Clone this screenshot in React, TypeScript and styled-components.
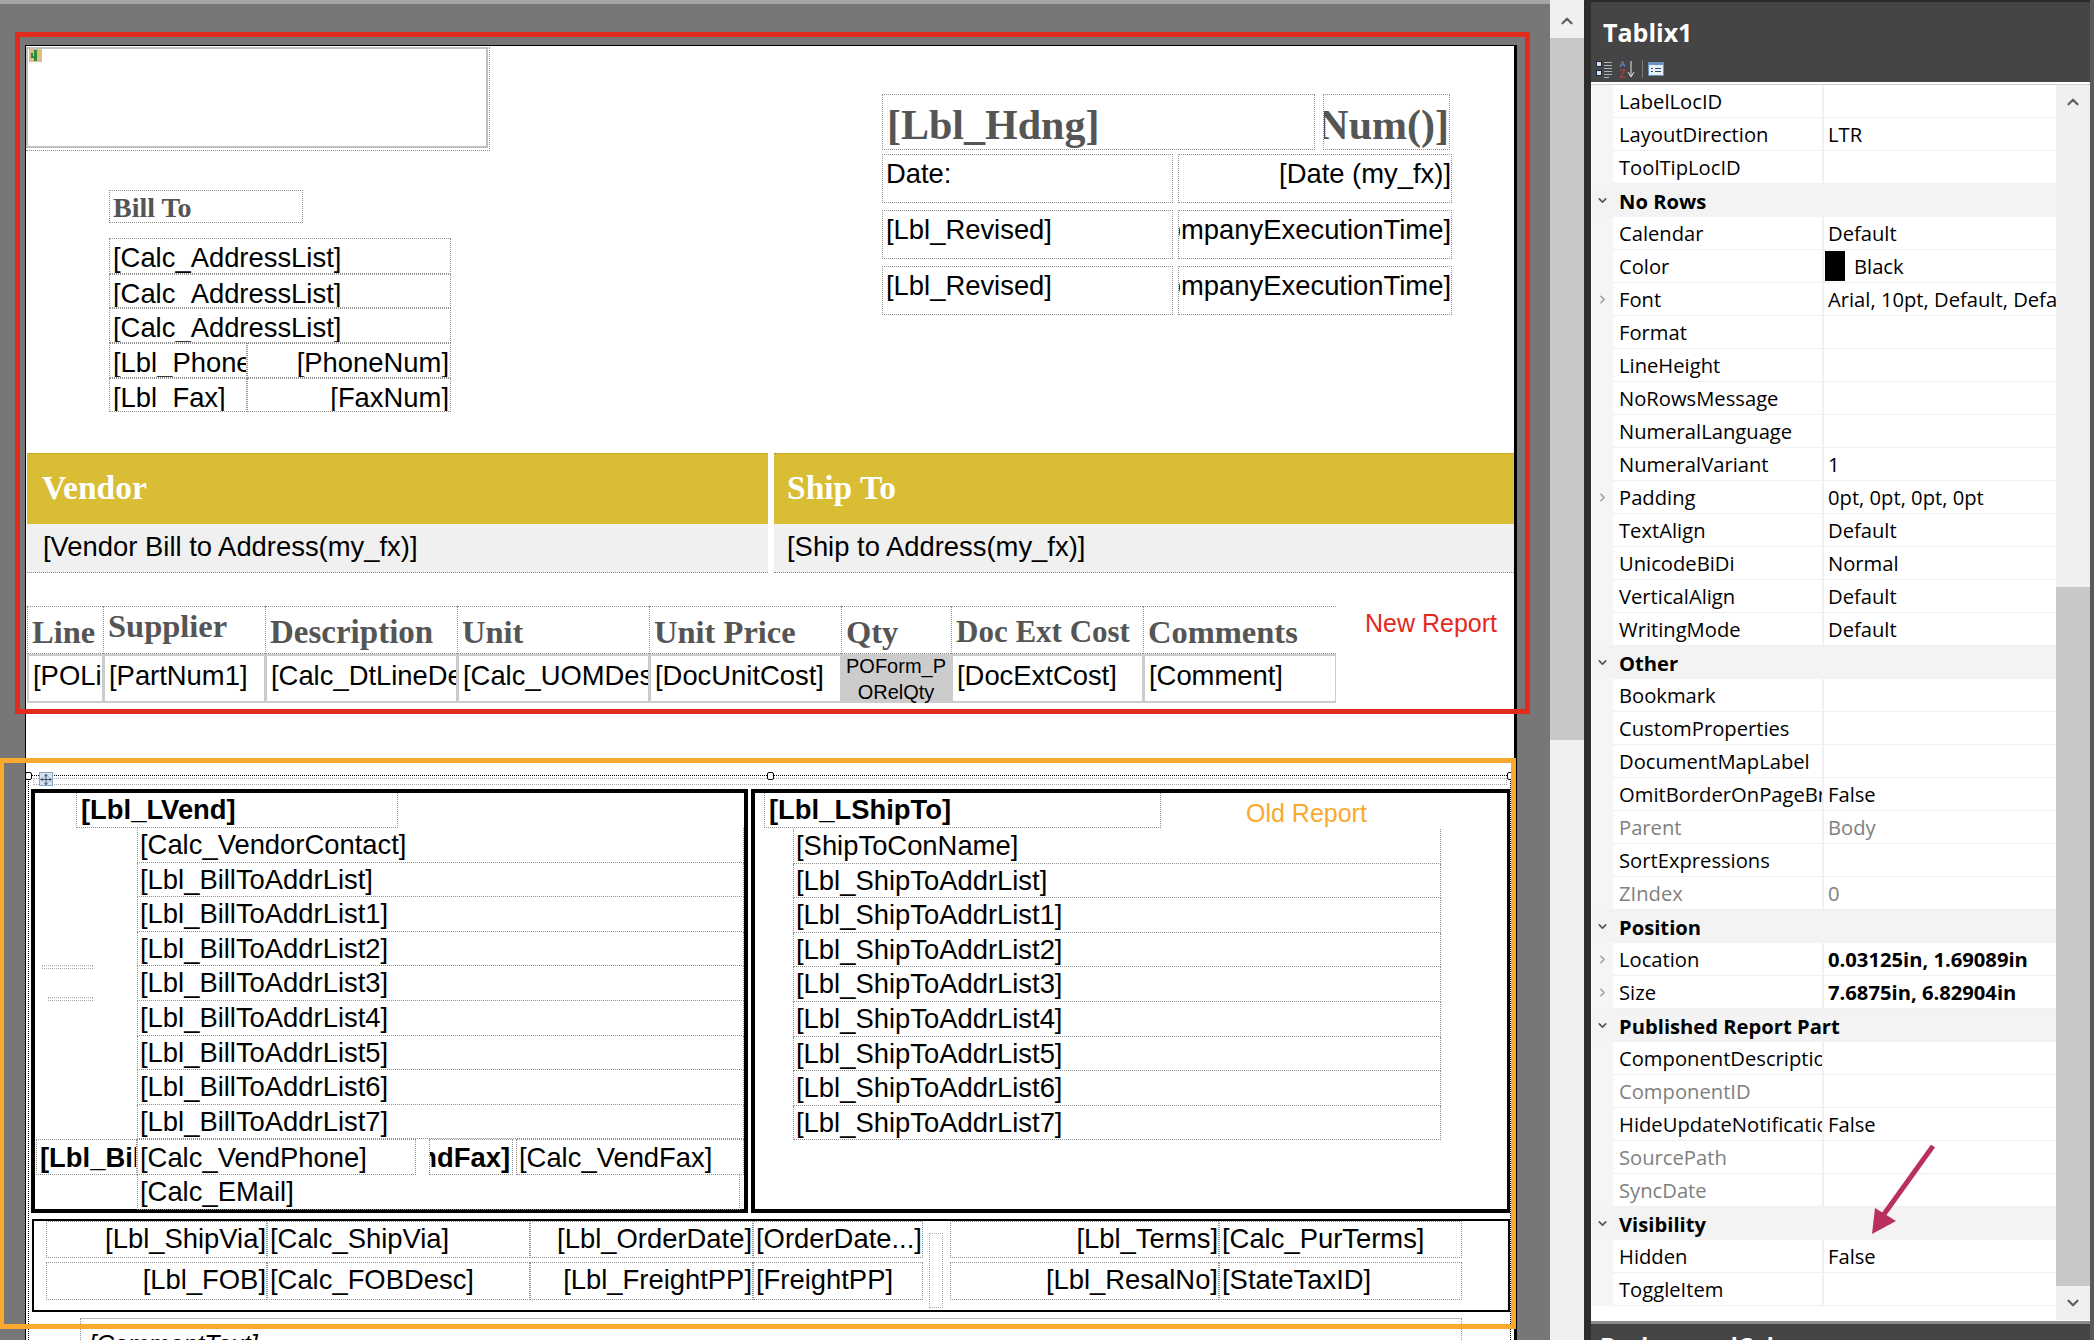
import styled, { createGlobalStyle } from "styled-components";
import { ChevronDown, ChevronRight, ChevronUp, Move } from "lucide-react";

const GlobalStyle = createGlobalStyle`
  * { box-sizing: border-box; }
  html, body { margin: 0; padding: 0; background: #777; }
`;

const BILL_ROWS = [36, 34, 35];
const LEFT_ADDR = [
  "[Calc_VendorContact]",
  "[Lbl_BillToAddrList]",
  "[Lbl_BillToAddrList1]",
  "[Lbl_BillToAddrList2]",
  "[Lbl_BillToAddrList3]",
  "[Lbl_BillToAddrList4]",
  "[Lbl_BillToAddrList5]",
  "[Lbl_BillToAddrList6]",
  "[Lbl_BillToAddrList7]",
];
const RIGHT_ADDR = [
  "[ShipToConName]",
  "[Lbl_ShipToAddrList]",
  "[Lbl_ShipToAddrList1]",
  "[Lbl_ShipToAddrList2]",
  "[Lbl_ShipToAddrList3]",
  "[Lbl_ShipToAddrList4]",
  "[Lbl_ShipToAddrList5]",
  "[Lbl_ShipToAddrList6]",
  "[Lbl_ShipToAddrList7]",
];
const LINE_COLS = [
  { w: 76, head: "Line", cell: "[POLine]" },
  { w: 162, head: "Supplier", cell: "[PartNum1]", raised: true },
  { w: 192, head: "Description", cell: "[Calc_DtLineDesc]", size: 33 },
  { w: 192, head: "Unit", cell: "[Calc_UOMDesc]" },
  { w: 192, head: "Unit Price", cell: "[DocUnitCost]" },
  { w: 110, head: "Qty", cell: "" },
  { w: 192, head: "Doc Ext Cost", cell: "[DocExtCost]", size: 31 },
  { w: 193, head: "Comments", cell: "[Comment]" },
];

type Prop = {
  name?: string;
  value?: string;
  section?: string;
  gray?: boolean;
  strong?: boolean;
  expand?: boolean;
  swatch?: boolean;
};

const PROPS: Prop[] = [
  { name: "LabelLocID" },
  { name: "LayoutDirection", value: "LTR" },
  { name: "ToolTipLocID" },
  { section: "No Rows" },
  { name: "Calendar", value: "Default" },
  { name: "Color", value: "Black", swatch: true },
  { name: "Font", value: "Arial, 10pt, Default, Default", expand: true },
  { name: "Format" },
  { name: "LineHeight" },
  { name: "NoRowsMessage" },
  { name: "NumeralLanguage" },
  { name: "NumeralVariant", value: "1" },
  { name: "Padding", value: "0pt, 0pt, 0pt, 0pt", expand: true },
  { name: "TextAlign", value: "Default" },
  { name: "UnicodeBiDi", value: "Normal" },
  { name: "VerticalAlign", value: "Default" },
  { name: "WritingMode", value: "Default" },
  { section: "Other" },
  { name: "Bookmark" },
  { name: "CustomProperties" },
  { name: "DocumentMapLabel" },
  { name: "OmitBorderOnPageBreak", value: "False" },
  { name: "Parent", value: "Body", gray: true },
  { name: "SortExpressions" },
  { name: "ZIndex", value: "0", gray: true },
  { section: "Position" },
  { name: "Location", value: "0.03125in, 1.69089in", expand: true, strong: true },
  { name: "Size", value: "7.6875in, 6.82904in", expand: true, strong: true },
  { section: "Published Report Part" },
  { name: "ComponentDescription" },
  { name: "ComponentID", gray: true },
  { name: "HideUpdateNotifications", value: "False" },
  { name: "SourcePath", gray: true },
  { name: "SyncDate", gray: true },
  { section: "Visibility" },
  { name: "Hidden", value: "False" },
  { name: "ToggleItem" },
];

const App = () => (
  <Screen>
    <GlobalStyle />
    <Designer>
      <Ruler />
      <Page>
        <TopArea>
          <TopLeft>
            <LogoBox>
              <LogoFrame>
                <svg width="13" height="13" viewBox="0 0 13 13">
                  <rect width="13" height="13" fill="#d9c08a" />
                  <rect x="5" y="1" width="3" height="11" fill="#2e8b3a" />
                  <rect x="2" y="4" width="2" height="4" fill="#2e8b3a" />
                  <rect x="9" y="3" width="2" height="4" fill="#e6c34a" />
                  <rect x="2" y="7" width="4" height="2" fill="#2e8b3a" />
                </svg>
              </LogoFrame>
            </LogoBox>
            <BillToLabel>Bill To</BillToLabel>
            <AddressBlock>
              {BILL_ROWS.map((h, i) => (
                <AddressRow key={i} $h={h}>
                  <Field $w={342}>[Calc_AddressList]</Field>
                </AddressRow>
              ))}
              <AddressRow $h={35}>
                <Field $w={138}>[Lbl_Phone]</Field>
                <Field $w={204} $right>
                  [PhoneNum]
                </Field>
              </AddressRow>
              <AddressRow $h={34}>
                <Field $w={138}>[Lbl_Fax]</Field>
                <Field $w={204} $right>
                  [FaxNum]
                </Field>
              </AddressRow>
            </AddressBlock>
          </TopLeft>
          <TopRight>
            <HeadingRow>
              <HeadingBox $w={433}>[Lbl_Hdng]</HeadingBox>
              <HeadingBox $w={127} $right>
                [PONum()]
              </HeadingBox>
            </HeadingRow>
            <InfoRow>
              <InfoCell $w={291}>Date:</InfoCell>
              <InfoCell $w={274} $right>
                [Date (my_fx)]
              </InfoCell>
            </InfoRow>
            <InfoRow>
              <InfoCell $w={291}>[Lbl_Revised]</InfoCell>
              <InfoCell $w={274} $right>
                [CompanyExecutionTime]
              </InfoCell>
            </InfoRow>
            <InfoRow>
              <InfoCell $w={291}>[Lbl_Revised]</InfoCell>
              <InfoCell $w={274} $right>
                [CompanyExecutionTime]
              </InfoCell>
            </InfoRow>
          </TopRight>
        </TopArea>

        <Bands>
          <BandHead>Vendor</BandHead>
          <BandHead $second>Ship To</BandHead>
          <BandBody>[Vendor Bill to Address(my_fx)]</BandBody>
          <BandBody $second>[Ship to Address(my_fx)]</BandBody>
        </Bands>

        <LineArea>
          <LineTable>
            {LINE_COLS.map((c) => (
              <LineHead key={c.head} $w={c.w} $raised={c.raised} $size={c.size}>
                {c.head}
              </LineHead>
            ))}
            {LINE_COLS.map((c) =>
              c.head === "Qty" ? (
                <QtyCell key={c.head} $w={c.w}>
                  <span>POForm_P</span>
                  <span>ORelQty</span>
                </QtyCell>
              ) : (
                <LineCell key={c.head} $w={c.w}>
                  {c.cell}
                </LineCell>
              )
            )}
          </LineTable>
          <NewReport>New Report</NewReport>
        </LineArea>

        <Selection>
          <Handle $left={-4} />
          <Handle $left={738} />
          <Handle $left={1478} />
          <MoveGrip>
            <Move size={13} strokeWidth={1.6} color="#1c2a44" />
          </MoveGrip>
          <Guides />
          <AddressBoxes>
            <BlackBox $w={717}>
              <StubLine $top={172} $left={7} $w={51} />
              <StubLine $top={204} $left={13} $w={45} />
              <LabelBox $ml={41} $w={322}>
                [Lbl_LVend]
              </LabelBox>
              {LEFT_ADDR.map((t) => (
                <AddrLine key={t} $ml={102} $w={607}>
                  {t}
                </AddrLine>
              ))}
              <VendRow>
                <BoldCell $w={101}>[Lbl_BillToPhone]</BoldCell>
                <AddrCell $w={279}>[Calc_VendPhone]</AddrCell>
                <BoldCell $w={84} $gap={13} $right>
                  [Lbl_VendFax]
                </BoldCell>
                <AddrCell $w={228} $gap={3}>
                  [Calc_VendFax]
                </AddrCell>
              </VendRow>
              <AddrLine $ml={102} $w={603}>
                [Calc_EMail]
              </AddrLine>
            </BlackBox>
            <BlackBox $w={759} $thinRight>
              <LabelRow>
                <LabelBox $ml={9} $w={397}>
                  [Lbl_LShipTo]
                </LabelBox>
                <OldReport>Old Report</OldReport>
              </LabelRow>
              {RIGHT_ADDR.map((t) => (
                <AddrLine key={t} $ml={38} $w={648}>
                  {t}
                </AddrLine>
              ))}
            </BlackBox>
          </AddressBoxes>
          <TermsBox>
            <TermsCell $right>[Lbl_ShipVia]</TermsCell>
            <TermsCell>[Calc_ShipVia]</TermsCell>
            <TermsCell $right>[Lbl_OrderDate]</TermsCell>
            <TermsCell>[OrderDate...]</TermsCell>
            <TermsStub />
            <TermsCell $right>[Lbl_Terms]</TermsCell>
            <TermsCell>[Calc_PurTerms]</TermsCell>
            <TermsCell $right>[Lbl_FOB]</TermsCell>
            <TermsCell>[Calc_FOBDesc]</TermsCell>
            <TermsCell $right>[Lbl_FreightPP]</TermsCell>
            <TermsCell>[FreightPP]</TermsCell>
            <TermsCell $right>[Lbl_ResalNo]</TermsCell>
            <TermsCell>[StateTaxID]</TermsCell>
          </TermsBox>
          <CommentCell>[CommentText]</CommentCell>
        </Selection>
      </Page>
    </Designer>

    <DesignerScroll>
      <ScrollButton>
        <ChevronUp size={18} strokeWidth={3} color="#606060" />
      </ScrollButton>
      <DesignerThumb />
    </DesignerScroll>

    <Panel>
      <PanelTitle>Tablix1</PanelTitle>
      <PanelTools>
        <svg width="70" height="18" viewBox="0 0 70 18">
          <rect x="0.5" y="1.5" width="5" height="5" fill="#cfe0f2" stroke="#1d2b3a" />
          <rect x="0.5" y="10.5" width="5" height="5" fill="#cfe0f2" stroke="#1d2b3a" />
          <path d="M8 2.5h8M8 5.5h8M8 8.5h8M8 11.5h8M8 14.5h8M8 17.5h5" stroke="#aab4bd" strokeWidth="1" />
          <path d="M24 7l2.5-6 2.5 6M25 5h3" stroke="#5b8fd0" strokeWidth="1" fill="none" />
          <path d="M24 10h5l-5 7h5" stroke="#c8423f" strokeWidth="1" fill="none" />
          <path d="M35 1v15M32 12l3 5 3-5" stroke="#e6e6e6" strokeWidth="1" fill="none" />
          <rect x="46" y="0" width="1" height="18" fill="#7a7a7a" />
          <rect x="52.5" y="2.5" width="15" height="13" fill="#e8eef6" stroke="#6a93c4" />
          <rect x="52" y="2" width="16" height="3" fill="#6a93c4" />
          <path d="M55 8.5h2M59 8.5h6M55 11.5h2M59 11.5h6" stroke="#33506f" strokeWidth="1" />
        </svg>
      </PanelTools>
      <GridArea>
        <PropList>
          {PROPS.map((p, i) =>
            p.section ? (
              <SectionRow key={i}>
                <ChevronDown size={13} strokeWidth={3} color="#555" />
                <SectionName>{p.section}</SectionName>
              </SectionRow>
            ) : (
              <PropRow key={i}>
                <Gutter>{p.expand && <ChevronRight size={13} strokeWidth={3} color="#a0a0a0" />}</Gutter>
                <PropName $gray={p.gray}>{p.name}</PropName>
                <PropValue $gray={p.gray} $strong={p.strong}>
                  {p.swatch && <Swatch />}
                  {p.value}
                </PropValue>
              </PropRow>
            )
          )}
        </PropList>
        <GridScroll>
          <GridScrollEnd>
            <ChevronUp size={18} strokeWidth={3} color="#606060" />
          </GridScrollEnd>
          <GridThumb />
          <GridScrollEnd>
            <ChevronDown size={18} strokeWidth={3} color="#606060" />
          </GridScrollEnd>
        </GridScroll>
      </GridArea>
      <PanelFooter>BackgroundColor</PanelFooter>
    </Panel>
    <PanelEdge />

    <RedFrame />
    <OrangeFrame />
    <Arrow width="80" height="100" viewBox="0 0 80 100">
      <path d="M71 1L20 72" stroke="#b9305e" strokeWidth="5" fill="none" />
      <path d="M10 89L13 63L34 76Z" fill="#b9305e" />
    </Arrow>
  </Screen>
);

const Screen = styled.div`
  position: relative;
  width: 2094px;
  height: 1340px;
  overflow: hidden;
  display: flex;
  background: #2d2d2d;
`;

const Designer = styled.div`
  width: 1550px;
  height: 1340px;
  background: #777;
  display: flex;
  flex-direction: column;
  flex-shrink: 0;
`;

const Ruler = styled.div`
  height: 4px;
  background: #a6a6a6;
  flex-shrink: 0;
`;

const Page = styled.div`
  margin: 41px 0 0 25px;
  width: 1492px;
  flex: 1;
  background: #fff;
  border-top: 1px solid #000;
  border-left: 1px solid #000;
  border-right: 3px solid #000;
  display: flex;
  flex-direction: column;
  color: #000;
  font-family: "Liberation Sans", Arial, sans-serif;
  font-size: 27.4px;
`;

const TopArea = styled.div`
  height: 407px;
  display: flex;
  flex-shrink: 0;
`;

const TopLeft = styled.div`
  width: 856px;
  flex-shrink: 0;
`;

const LogoBox = styled.div`
  width: 464px;
  height: 104px;
  margin-top: 1px;
  border-right: 1px dotted #909090;
  border-bottom: 1px dotted #909090;
  padding: 0 1px 2px 0;
`;

const LogoFrame = styled.div`
  height: 100%;
  border: 2px solid #c0c0c0;
  padding-left: 1px;
  display: flex;
  align-items: flex-start;
`;

const BillToLabel = styled.div`
  margin: 39px 0 0 83px;
  width: 194px;
  height: 33px;
  border: 1px dotted #909090;
  padding: 2px 0 0 3px;
  font: bold 28px/30px "Liberation Serif", "Times New Roman", serif;
  color: #555;
`;

const AddressBlock = styled.div`
  margin: 15px 0 0 83px;
`;

const AddressRow = styled.div<{ $h: number }>`
  display: flex;
  height: ${(p) => p.$h}px;
`;

const Field = styled.div<{ $w: number; $right?: boolean }>`
  width: ${(p) => p.$w}px;
  border: 1px dotted #909090;
  padding: 4px 1px 0 3px;
  line-height: 30px;
  display: flex;
  justify-content: ${(p) => (p.$right ? "flex-end" : "flex-start")};
  overflow: hidden;
  white-space: nowrap;
`;

const TopRight = styled.div`
  padding-top: 48px;
`;

const HeadingRow = styled.div`
  display: flex;
  gap: 8px;
  margin-bottom: 4px;
`;

const HeadingBox = styled.div<{ $w: number; $right?: boolean }>`
  width: ${(p) => p.$w}px;
  height: 56px;
  border: 1px dotted #909090;
  padding: 6px ${(p) => (p.$right ? 0 : 4)}px 0 4px;
  display: flex;
  justify-content: ${(p) => (p.$right ? "flex-end" : "flex-start")};
  overflow: hidden;
  white-space: nowrap;
  font: bold 42px/48px "Liberation Serif", "Times New Roman", serif;
  color: #555;
`;

const InfoRow = styled.div`
  display: flex;
  gap: 5px;
  margin-bottom: 7px;
`;

const InfoCell = styled.div<{ $w: number; $right?: boolean }>`
  width: ${(p) => p.$w}px;
  height: 49px;
  border: 1px dotted #909090;
  padding: 3px 0 0 3px;
  line-height: 32px;
  display: flex;
  justify-content: ${(p) => (p.$right ? "flex-end" : "flex-start")};
  overflow: hidden;
  white-space: nowrap;
`;

const Bands = styled.div`
  margin-left: 1px;
  display: grid;
  grid-template-columns: 741px 740px;
  grid-template-rows: 71px 49px;
  column-gap: 6px;
  flex-shrink: 0;
`;

const BandHead = styled.div<{ $second?: boolean }>`
  background: #d8bd35;
  border-top: 1px dotted #909090;
  padding-left: ${(p) => (p.$second ? 13 : 15)}px;
  font: bold 33.5px/68px "Liberation Serif", "Times New Roman", serif;
  color: #fff;
`;

const BandBody = styled.div<{ $second?: boolean }>`
  background: #f0f0f0;
  border-bottom: 1px dotted #909090;
  padding-left: ${(p) => (p.$second ? 13 : 16)}px;
  line-height: 46px;
`;

const LineArea = styled.div`
  margin: 33px 0 0 1px;
  display: flex;
  align-items: flex-start;
  flex-shrink: 0;
`;

const LineTable = styled.div`
  display: flex;
  flex-wrap: wrap;
  width: 1309px;
`;

const LineHead = styled.div<{ $w: number; $raised?: boolean; $size?: number }>`
  width: ${(p) => p.$w}px;
  height: 48px;
  border: 1px dotted #909090;
  border-right-width: 0;
  padding: ${(p) => (p.$raised ? 2 : 8)}px 0 0 4px;
  font: bold ${(p) => p.$size ?? 32.5}px/34px "Liberation Serif", "Times New Roman", serif;
  color: #555;
  white-space: nowrap;
  overflow: hidden;
`;

const LineCell = styled.div<{ $w: number }>`
  width: ${(p) => p.$w}px;
  height: 49px;
  border: 2px solid #ccc;
  border-left-width: 2px;
  border-right-width: 1px;
  padding: 4px 12px 0 4px;
  line-height: 32px;
  white-space: nowrap;
  overflow: hidden;
`;

const QtyCell = styled.div<{ $w: number }>`
  width: ${(p) => p.$w}px;
  height: 49px;
  background: #ccc;
  display: flex;
  flex-direction: column;
  align-items: center;
  justify-content: center;
  font-size: 20px;
  line-height: 26px;
  overflow: hidden;
  white-space: nowrap;
`;

const NewReport = styled.div`
  margin: 1px 0 0 29px;
  font-size: 25px;
  line-height: 32px;
  color: #e5281e;
  white-space: nowrap;
`;

const Selection = styled.div`
  position: relative;
  margin: 72px 0 0 2px;
  width: 1483px;
  flex: 1;
  border: 1px dotted #000;
  border-bottom: none;
  padding-left: 2px;
`;

const Handle = styled.span<{ $left: number }>`
  position: absolute;
  top: -4px;
  left: ${(p) => p.$left}px;
  width: 7px;
  height: 8px;
  border: 1px solid #000;
  border-radius: 2px;
  background: #fff;
`;

const MoveGrip = styled.span`
  position: absolute;
  top: -4px;
  left: 10px;
  width: 14px;
  height: 14px;
  background: #d6e2f2;
  border: 1px solid #8aa2c4;
  display: flex;
  align-items: center;
  justify-content: center;
`;

const Guides = styled.div`
  height: 7px;
  margin: 2px 3px 4px 2px;
  border: 1px dotted #aaa;
`;

const AddressBoxes = styled.div`
  display: flex;
  gap: 3px;
  height: 424px;
`;

const BlackBox = styled.div<{ $w: number; $thinRight?: boolean }>`
  position: relative;
  width: ${(p) => p.$w}px;
  border: 4px solid #000;
  border-right-width: ${(p) => (p.$thinRight ? 3 : 4)}px;
`;

const StubLine = styled.span<{ $top: number; $left: number; $w: number }>`
  position: absolute;
  top: ${(p) => p.$top}px;
  left: ${(p) => p.$left}px;
  width: ${(p) => p.$w}px;
  height: 4px;
  border: 1px dotted #aaa;
`;

const LabelRow = styled.div`
  display: flex;
  align-items: flex-start;
`;

const LabelBox = styled.div<{ $ml: number; $w: number }>`
  margin-left: ${(p) => p.$ml}px;
  width: ${(p) => p.$w}px;
  height: 35px;
  border: 1px dotted #909090;
  border-top: none;
  padding-left: 4px;
  font-weight: bold;
  line-height: 34px;
  white-space: nowrap;
  overflow: hidden;
`;

const OldReport = styled.div`
  margin: 4px 0 0 85px;
  font-size: 25px;
  line-height: 32px;
  color: #f9a92e;
  white-space: nowrap;
`;

const AddrLine = styled.div<{ $ml: number; $w: number }>`
  margin-left: ${(p) => p.$ml}px;
  width: ${(p) => p.$w}px;
  height: 34.6px;
  border: 1px dotted #909090;
  border-top: none;
  padding-left: 2px;
  line-height: 34px;
  white-space: nowrap;
  overflow: hidden;
`;

const VendRow = styled.div`
  display: flex;
  margin-left: 1px;
  height: 36px;
`;

const BoldCell = styled.div<{ $w: number; $gap?: number; $right?: boolean }>`
  width: ${(p) => p.$w}px;
  margin-left: ${(p) => p.$gap ?? 0}px;
  border: 1px dotted #909090;
  padding: 0 2px 0 3px;
  font-weight: bold;
  line-height: 36px;
  display: flex;
  justify-content: ${(p) => (p.$right ? "flex-end" : "flex-start")};
  white-space: nowrap;
  overflow: hidden;
`;

const AddrCell = styled.div<{ $w: number; $gap?: number }>`
  width: ${(p) => p.$w}px;
  margin-left: ${(p) => p.$gap ?? 0}px;
  border: 1px dotted #909090;
  padding-left: 2px;
  line-height: 36px;
  white-space: nowrap;
  overflow: hidden;
`;

const TermsBox = styled.div`
  position: relative;
  margin: 6px 0 6px 1px;
  width: 1478px;
  height: 93px;
  border: 2px solid #000;
  padding-left: 12px;
  display: grid;
  grid-template-columns: 221px 263px 223px 170px 27px 269px 243px;
  grid-template-rows: 37px 38px;
  row-gap: 4px;
`;

const TermsCell = styled.div<{ $right?: boolean }>`
  border: 1px dotted #909090;
  padding: 0 0 0 2px;
  line-height: 33px;
  display: flex;
  justify-content: ${(p) => (p.$right ? "flex-end" : "flex-start")};
  white-space: nowrap;
  overflow: hidden;
`;

const TermsStub = styled.div`
  grid-column: 5;
  grid-row: 1 / 3;
  width: 14px;
  height: 75px;
  margin: 12px 0 0 6px;
  border: 1px dotted #aaa;
`;

const CommentCell = styled.div`
  margin-left: 49px;
  width: 1382px;
  border-top: 1px solid #bbb;
  border-left: 1px dotted #909090;
  border-right: 1px dotted #909090;
  padding: 9px 0 0 8px;
  font-size: 25px;
  font-style: italic;
  line-height: 32px;
  height: 42px;
`;

const DesignerScroll = styled.div`
  width: 34px;
  height: 1340px;
  flex-shrink: 0;
  background: #f0f0f0;
  padding-top: 4px;
`;

const ScrollButton = styled.div`
  height: 34px;
  display: flex;
  align-items: center;
  justify-content: center;
`;

const DesignerThumb = styled.div`
  height: 702px;
  background: #c8c8c8;
`;

const Panel = styled.div`
  margin-left: 7px;
  width: 499px;
  height: 1340px;
  flex-shrink: 0;
  display: flex;
  flex-direction: column;
  background: #fff;
  border-top: 2px solid #2b2b2b;
  font-family: "Open Sans", "Noto Sans", sans-serif;
`;

const PanelTitle = styled.div`
  height: 58px;
  background: #454545;
  padding: 10px 0 0 12px;
  color: #fff;
  font-size: 25px;
  font-weight: 700;
  line-height: 40px;
`;

const PanelTools = styled.div`
  height: 22px;
  background: #454545;
  padding-left: 5px;
`;

const GridArea = styled.div`
  margin-top: 2px;
  height: 1236px;
  display: flex;
  border-top: 1px solid #d0d0d0;
`;

const PropList = styled.div`
  width: 465px;
  padding-left: 1px;
  flex-shrink: 0;
`;

const PropRow = styled.div`
  height: 33px;
  display: grid;
  grid-template-columns: 21px 211px 1fr;
`;

const Gutter = styled.div`
  background: #f5f5f5;
  display: flex;
  align-items: center;
  justify-content: center;
`;

const PropName = styled.div<{ $gray?: boolean }>`
  border-right: 2px solid #f0f0f0;
  border-bottom: 1px solid #f0f0f0;
  padding-left: 6px;
  font-size: 20.2px;
  line-height: 32px;
  overflow: hidden;
  white-space: nowrap;
  color: ${(p) => (p.$gray ? "#808080" : "#000")};
`;

const PropValue = styled.div<{ $gray?: boolean; $strong?: boolean }>`
  border-bottom: 1px solid #f0f0f0;
  padding-left: 4px;
  font-size: 20.2px;
  font-weight: ${(p) => (p.$strong ? 700 : 400)};
  line-height: 32px;
  display: flex;
  overflow: hidden;
  white-space: nowrap;
  color: ${(p) => (p.$gray ? "#808080" : "#000")};
`;

const Swatch = styled.span`
  width: 20px;
  height: 30px;
  margin: 1px 9px 0 -3px;
  background: #000;
  flex-shrink: 0;
`;

const SectionRow = styled.div`
  height: 33px;
  background: #f3f3f3;
  display: flex;
  align-items: center;
  padding-left: 4px;
`;

const SectionName = styled.div`
  margin-left: 10px;
  font-size: 20.2px;
  font-weight: 700;
  line-height: 30px;
  color: #000;
  white-space: nowrap;
`;

const GridScroll = styled.div`
  flex: 1;
  display: flex;
  flex-direction: column;
  background: #f0f0f0;
`;

const GridScrollEnd = styled.div`
  height: 34px;
  display: flex;
  align-items: center;
  justify-content: center;
`;

const GridThumb = styled.div`
  margin-top: auto;
  height: 699px;
  background: #c8c8c8;
`;

const PanelFooter = styled.div`
  height: 19px;
  margin-top: auto;
  background: #454545;
  border-top: 3px solid #8c8c8c;
  padding: 8px 0 0 9px;
  color: #fff;
  font-size: 23px;
  font-weight: 700;
  line-height: 28px;
  overflow: hidden;
  white-space: nowrap;
`;

const PanelEdge = styled.div`
  width: 4px;
  background: #5a5a5a;
`;

const RedFrame = styled.div`
  position: absolute;
  left: 15px;
  top: 32px;
  width: 1515px;
  height: 682px;
  border: 5px solid #e22b1d;
`;

const OrangeFrame = styled.div`
  position: absolute;
  left: -1px;
  top: 758px;
  width: 1517px;
  height: 571px;
  border: 5px solid #f9a92e;
`;

const Arrow = styled.svg`
  position: absolute;
  left: 1862px;
  top: 1145px;
`;

export default App;
